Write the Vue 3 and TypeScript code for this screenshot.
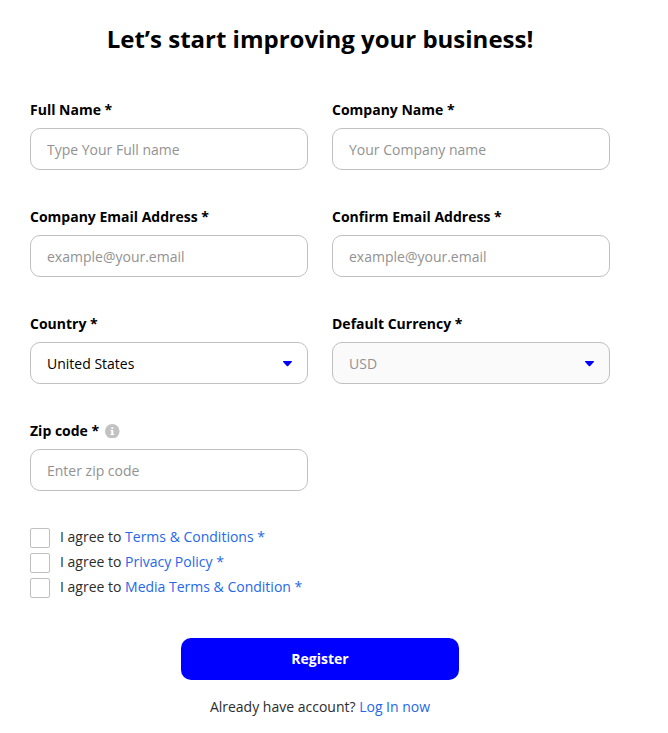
<script setup lang="ts">
import { reactive } from 'vue'

interface Field {
  key: string
  label: string
  placeholder: string
  type: 'input' | 'select'
  options?: string[]
  disabled?: boolean
  info?: boolean
}

const fields: Field[] = [
  { key: 'name', label: 'Full Name *', placeholder: 'Type Your Full name', type: 'input' },
  { key: 'company', label: 'Company Name *', placeholder: 'Your Company name', type: 'input' },
  { key: 'email', label: 'Company Email Address *', placeholder: 'example@your.email', type: 'input' },
  { key: 'confirm', label: 'Confirm Email Address *', placeholder: 'example@your.email', type: 'input' },
  { key: 'country', label: 'Country *', placeholder: '', type: 'select', options: ['United States'] },
  { key: 'currency', label: 'Default Currency *', placeholder: '', type: 'select', options: ['USD'], disabled: true },
  { key: 'zip', label: 'Zip code *', placeholder: 'Enter zip code', type: 'input', info: true },
]

const values = reactive<Record<string, string>>({
  name: '', company: '', email: '', confirm: '', country: 'United States', currency: 'USD', zip: '',
})

const agreements = reactive([
  { text: 'Terms & Conditions *', checked: false },
  { text: 'Privacy Policy *', checked: false },
  { text: 'Media Terms & Condition *', checked: false },
])
</script>

<template>
  <main class="page">
    <h1>Let’s start improving your business!</h1>
    <form @submit.prevent>
      <div class="grid">
        <div v-for="f in fields" :key="f.key" class="field">
          <label :for="f.key">
            {{ f.label }}
            <svg v-if="f.info" class="info" viewBox="0 0 14 14">
              <circle cx="7" cy="7" r="7" fill="#c2c2c2" />
              <path d="M6.1 3.2h1.8v1.6H6.1zM5.4 5.9H8v3.6h.7v1.1H5.4V9.5h.7V7h-.7z" fill="#fff" />
            </svg>
          </label>
          <input v-if="f.type === 'input'" :id="f.key" v-model="values[f.key]" class="control" :placeholder="f.placeholder" />
          <div v-else class="select">
            <select :id="f.key" v-model="values[f.key]" class="control" :disabled="f.disabled">
              <option v-for="o in f.options" :key="o">{{ o }}</option>
            </select>
            <svg class="caret" viewBox="0 0 9 6"><path d="M.5 0h8q.8.2.3 1L5.2 4.9q-.7.7-1.4 0L.2 1Q-.3.2.5 0z" fill="#00f" /></svg>
          </div>
        </div>
      </div>
      <div class="agreements">
        <label v-for="a in agreements" :key="a.text" class="agree">
          <input v-model="a.checked" type="checkbox" />
          <span>I agree to <a href="#">{{ a.text }}</a></span>
        </label>
      </div>
      <button type="submit">Register</button>
    </form>
    <p class="login">Already have account? <a href="#">Log In now</a></p>
  </main>
</template>

<style>
body {
  background: #fff;
}
</style>

<style scoped>
.page {
  box-sizing: border-box;
  width: 640px;
  height: 733px;
  padding: 22px 30px 0;
  font: 14px/20px "Open Sans", sans-serif;
  color: #2c2c2c;
}
h1 {
  margin: 0 0 44px;
  font-size: 24px;
  line-height: 34px;
  font-weight: 700;
  text-align: center;
  color: #000;
}
.grid {
  display: grid;
  grid-template-columns: 278px 278px;
  column-gap: 24px;
  row-gap: 37px;
}
.field label {
  display: flex;
  align-items: center;
  gap: 6px;
  height: 20px;
  margin-bottom: 8px;
  font-weight: 700;
  color: #000;
}
.info {
  width: 14.5px;
  height: 14.5px;
}
.control {
  display: block;
  box-sizing: border-box;
  width: 278px;
  height: 42px;
  margin: 0;
  padding: 0 16px;
  border: 1px solid #c0c0c0;
  border-radius: 10px;
  background: #fff;
  font: inherit;
  color: #000;
  appearance: none;
  outline: none;
}
.control::placeholder {
  color: #929292;
  opacity: 1;
}
select.control {
  padding-top: 2px;
}
.control:disabled {
  background: #fafafa;
  color: #929292;
  opacity: 1;
}
.select {
  position: relative;
}
.caret {
  position: absolute;
  right: 16px;
  top: 19px;
  width: 9px;
  height: 6px;
  pointer-events: none;
}
.agreements {
  margin-top: 33px;
}
.agree {
  display: flex;
  align-items: center;
  gap: 10px;
  height: 25px;
}
.agree input {
  appearance: none;
  box-sizing: border-box;
  width: 20px;
  height: 20px;
  margin: 2px 0 0;
  border: 1px solid #c0c0c0;
  border-radius: 2px;
  background: #fff;
}
a {
  color: #2668e8;
  text-decoration: none;
}
button {
  display: block;
  width: 278px;
  height: 42px;
  margin: 39px auto 0;
  padding: 0;
  border: 0;
  border-radius: 10px;
  background: #00f;
  color: #fff;
  font: 700 14px/20px "Open Sans", sans-serif;
}
.login {
  margin: 17px 0 0;
  text-align: center;
}
</style>
